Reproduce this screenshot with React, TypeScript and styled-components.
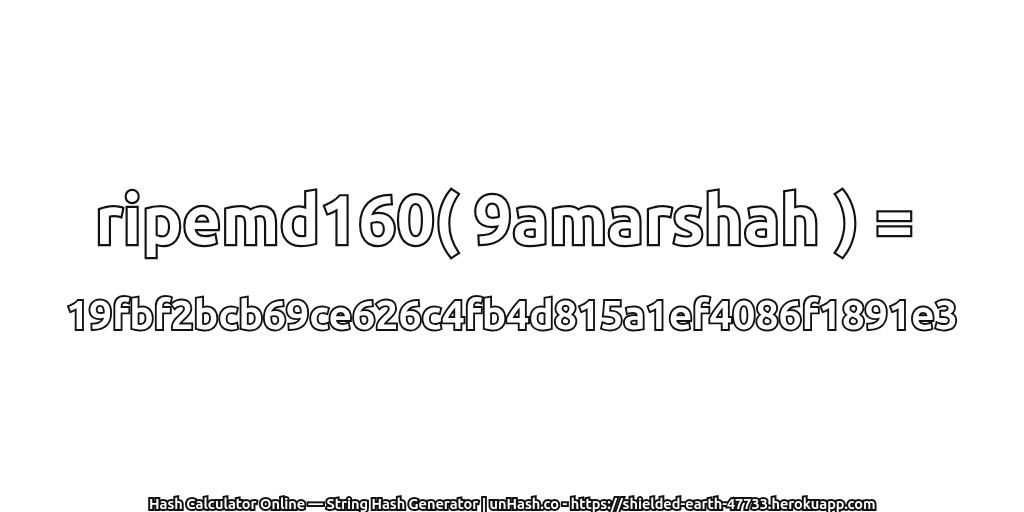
import styled, { createGlobalStyle } from 'styled-components';

const GlobalStyle = createGlobalStyle`
    html, body {
        margin: 0;
        padding: 0;
        background: #fff;
    }
`;

const Page = styled.div`
    position: relative;
    width: 1024px;
    height: 512px;
    display: flex;
    flex-direction: column;
    align-items: center;
    overflow: hidden;
    font-family: 'Ubuntu', 'DejaVu Sans', 'Noto Sans', sans-serif;
    font-weight: 700;
    background: #fff;
`;

const Heading = styled.div`
    margin-top: 184px;
    height: 70px;
    line-height: 70px;
    font-size: 67.7px;
    white-space: nowrap;
    color: #fff;
    -webkit-text-stroke: 4.4px #111;
    paint-order: stroke fill;
    will-change: transform;
`;

const HashLine = styled.div`
    margin-top: 38px;
    height: 44px;
    line-height: 44px;
    font-size: 41px;
    white-space: nowrap;
    color: #fff;
    -webkit-text-stroke: 3.8px #111;
    paint-order: stroke fill;
    will-change: transform;
`;

const Footer = styled.div`
    margin-top: auto;
    height: 17px;
    line-height: 17px;
    font-size: 14.5px;
    white-space: nowrap;
    color: #fff;
    -webkit-text-stroke: 4px #111;
    paint-order: stroke fill;
    will-change: transform;
`;

const App = () => {
    return (
        <>
            <GlobalStyle />
            <Page>
                <Heading>ripemd160( 9amarshah ) =&nbsp;</Heading>
                <HashLine>19fbf2bcb69ce626c4fb4d815a1ef4086f1891e3</HashLine>
                <Footer>Hash Calculator Online — String Hash Generator | unHash.co - https://shielded-earth-47733.herokuapp.com</Footer>
            </Page>
        </>
    );
};

export default App;
